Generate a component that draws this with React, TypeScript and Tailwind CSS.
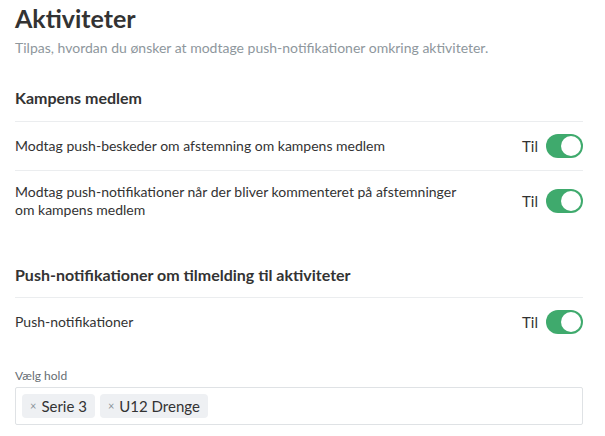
import React from "react";

function Toggle() {
  return (
    <div className="flex items-center gap-2">
      <span className="text-[15px] text-[#333]">Til</span>
      <div className="w-[37px] h-[24px] rounded-full bg-[#3faa6d] flex items-center justify-end pr-[2px]">
        <div className="w-[20px] h-[20px] rounded-full bg-white" />
      </div>
    </div>
  );
}

function Row({ children, border = true }: { children: React.ReactNode; border?: boolean }) {
  return (
    <div className={"flex items-center justify-between py-[12px] " + (border ? "border-b border-[#ebedef]" : "")}>
      <div className="max-w-[455px] text-[14px] leading-[18px] text-[#333]">{children}</div>
      <Toggle />
    </div>
  );
}

function Chip({ label }: { label: string }) {
  return (
    <div className="flex items-center h-[24px] rounded-[4px] bg-[#eef0f3] pl-[8px] pr-[8px] gap-[5px]">
      <span className="text-[11px] text-[#8a9299]">×</span>
      <span className="text-[15px] text-[#333]">{label}</span>
    </div>
  );
}

export default function App() {
  return (
    <div className="min-h-[436px] bg-white px-[15px] pt-[2px] pr-[22px]" style={{ fontFamily: "Lato, 'Open Sans', sans-serif" }}>
      <h1 className="text-[25px] leading-[32px] font-bold text-[#333]">Aktiviteter</h1>
      <p className="mt-[4px] text-[14px] leading-[20px] text-[#8e979d]">
        Tilpas, hvordan du ønsker at modtage push-notifikationer omkring aktiviteter.
      </p>

      <h2 className="mt-[28px] pb-[11px] border-b border-[#ebedef] text-[16px] leading-[24px] font-bold text-[#333]">
        Kampens medlem
      </h2>
      <Row>Modtag push-beskeder om afstemning om kampens medlem</Row>
      <Row border={false}>
        Modtag push-notifikationer når der bliver kommenteret på afstemninger om kampens medlem
      </Row>

      <h2 className="mt-[32px] pb-[10px] border-b border-[#ebedef] text-[16px] leading-[24px] font-bold text-[#333]">
        Push-notifikationer om tilmelding til aktiviteter
      </h2>
      <Row border={false}>Push-notifikationer</Row>

      <div className="mt-[22px]">
        <div className="text-[12px] leading-[16px] text-[#666d73] mb-[3px]">Vælg hold</div>
        <div className="border border-[#dfe2e5] rounded-[2px] p-[6px] flex gap-[5px]">
          <Chip label="Serie 3" />
          <Chip label="U12 Drenge" />
        </div>
      </div>
    </div>
  );
}
